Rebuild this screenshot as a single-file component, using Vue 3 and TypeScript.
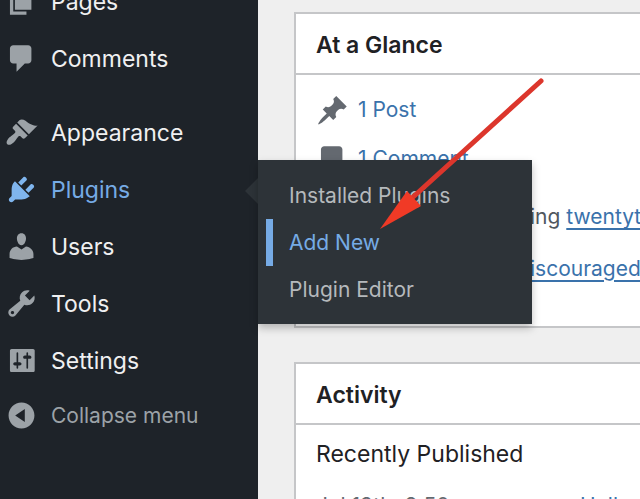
<script setup lang="ts">
import { ref } from 'vue'

interface MenuItem {
  id: string
  label: string
  path: string
  current?: boolean
  gap?: boolean
}

const commentPath =
  'M5 2h9c1.1 0 2 .9 2 2v7c0 1.1-.9 2-2 2h-2l-5 5v-5H5c-1.1 0-2-.9-2-2V4c0-1.1.9-2 2-2z'
const postPath =
  'M10.44 3.02l1.82-1.82 6.36 6.35-1.83 1.82c-1.05-.68-2.48-.57-3.41.36l-.75.75c-.92.93-1.04 2.35-.35 3.41l-1.83 1.82-2.41-2.41-2.8 2.79c-.42.42-3.38 2.71-3.8 2.29s1.86-3.39 2.28-3.81l2.79-2.79L4.1 9.36l1.83-1.82c1.05.69 2.48.57 3.4-.36l.75-.75c.93-.92 1.05-2.35.36-3.41z'
const collapsePath =
  'M10 2.16c4.33 0 7.84 3.51 7.84 7.84s-3.51 7.84-7.84 7.84S2.16 14.33 2.16 10 5.67 2.16 10 2.16zm2 11.72V6.12L6.18 9.97z'

const menu: MenuItem[] = [
  { id: 'pages', label: 'Pages', path: 'M6 15V2h10v13H6zm-1 1h8v2H3V5h2v11z' },
  { id: 'comments', label: 'Comments', path: commentPath },
  {
    id: 'appearance',
    label: 'Appearance',
    gap: true,
    path: 'M14.48 11.06L7.41 3.99l1.5-1.5c.5-.56 2.3-.47 3.51.32 1.21.8 1.43 1.28 2.91 2.1 1.18.64 2.45 1.26 4.45.85zm-.71.71L6.7 4.7 4.93 6.47c-.39.39-.39 1.02 0 1.41l1.06 1.06c.39.39.39 1.03 0 1.42-.6.6-1.43 1.11-2.21 1.69-.35.26-.7.53-1.01.84C1.43 14.23.4 16.08 1.4 17.07c.99 1 2.84-.03 4.18-1.36.31-.31.58-.66.85-1.02.57-.78 1.08-1.61 1.69-2.21.39-.39 1.02-.39 1.41 0l1.06 1.06c.39.39 1.02.39 1.41 0z',
  },
  {
    id: 'plugins',
    label: 'Plugins',
    current: true,
    path: 'M13.11 4.36L9.87 7.6 8 5.73l3.24-3.24c.35-.34 1.05-.2 1.56.32.52.51.66 1.21.31 1.55zm-8 1.77l.91-1.12 9.01 9.01-1.19.84c-.71.71-2.63 1.16-3.82 1.16H6.14L4.9 17.26c-.59.59-1.54.59-2.12 0-.59-.58-.59-1.53 0-2.12l1.24-1.24v-3.88c0-1.13.4-3.19 1.09-3.89zm7.26 3.97l3.24-3.24c.34-.35 1.04-.21 1.55.31.52.51.66 1.21.31 1.55l-3.24 3.25z',
  },
  {
    id: 'users',
    label: 'Users',
    path: 'M10 9.25c-2.27 0-2.73-3.44-2.73-3.44C7 4.02 7.82 2 9.97 2c2.16 0 2.98 2.02 2.71 3.81 0 0-.41 3.44-2.68 3.44zm0 2.57L12.72 10c2.39 0 4.52 2.33 4.52 4.53v2.49s-3.65 1.13-7.24 1.13c-3.65 0-7.24-1.13-7.24-1.13v-2.49c0-2.25 1.94-4.48 4.47-4.48z',
  },
  {
    id: 'tools',
    label: 'Tools',
    path: 'M16.68 9.77c-1.34 1.34-3.3 1.67-4.95.99l-5.41 6.52c-.99.99-2.59.99-3.58 0s-.99-2.59 0-3.57l6.52-5.42c-.68-1.65-.35-3.61.99-4.95 1.28-1.28 3.12-1.62 4.72-1.06l-2.89 2.89 2.82 2.82 2.86-2.87c.53 1.58.18 3.39-1.08 4.65zM3.81 16.21c.4.39 1.04.39 1.43 0 .4-.4.4-1.04 0-1.43-.39-.4-1.03-.4-1.43 0-.39.39-.39 1.03 0 1.43z',
  },
  {
    id: 'settings',
    label: 'Settings',
    path: 'M18 16V4c0-.55-.45-1-1-1H4c-.55 0-1 .45-1 1v12c0 .55.45 1 1 1h13c.55 0 1-.45 1-1zM8 11h1c.55 0 1 .45 1 1s-.45 1-1 1H8v1.5c0 .28-.22.5-.5.5s-.5-.22-.5-.5V13H6c-.55 0-1-.45-1-1s.45-1 1-1h1V5.5c0-.28.22-.5.5-.5s.5.22.5.5V11zm5-2h-1c-.55 0-1-.45-1-1s.45-1 1-1h1V5.5c0-.28.22-.5.5-.5s.5.22.5.5V7h1c.55 0 1 .45 1 1s-.45 1-1 1h-1v5.5c0 .28-.22.5-.5.5s-.5-.22-.5-.5V9z',
  },
]

const submenu: string[] = ['Installed Plugins', 'Add New', 'Plugin Editor']
const active = ref('Add New')
</script>

<template>
  <div class="admin">
    <nav class="sidebar">
      <ul class="menu">
        <li v-for="item in menu" :key="item.id" :class="{ gap: item.gap, current: item.current }">
          <a class="row" :href="'#' + item.id">
            <svg class="icon" viewBox="0 0 20 20" aria-hidden="true"><path :d="item.path" /></svg>
            <span>{{ item.label }}</span>
          </a>
          <ul v-if="item.current" class="flyout">
            <li v-for="name in submenu" :key="name">
              <a href="#plugins" :class="{ on: name === active }" @click.prevent="active = name">{{ name }}</a>
            </li>
          </ul>
        </li>
        <li>
          <button class="row collapse" type="button">
            <svg class="icon" viewBox="0 0 20 20" aria-hidden="true">
              <path fill-rule="evenodd" :d="collapsePath" />
            </svg>
            <span>Collapse menu</span>
          </button>
        </li>
      </ul>
    </nav>

    <main class="content">
      <section class="box">
        <h2>At a Glance</h2>
        <div class="glance">
          <ul class="counts">
            <li>
              <svg class="icon" viewBox="0 0 20 20" aria-hidden="true"><path :d="postPath" /></svg>
              <a href="#posts">1 Post</a>
            </li>
            <li>
              <svg class="icon" viewBox="0 0 20 20" aria-hidden="true"><path :d="commentPath" /></svg>
              <a href="#comments">1 Comment</a>
            </li>
          </ul>
          <p class="theme">ing <a href="#theme">twentyt</a></p>
          <p class="engines"><a href="#reading">iscouraged</a></p>
        </div>
      </section>

      <section class="box">
        <h2>Activity</h2>
        <div class="activity">
          <h3>Recently Published</h3>
          <p class="entry"><time>Jul 19th, 8:50 am</time><a href="#hello">Hello</a></p>
        </div>
      </section>
    </main>

    <svg class="arrow" viewBox="0 0 164 154" aria-hidden="true">
      <path class="shaft" d="M161 4L32 121" />
      <path class="head" d="M0 152L27 114L41 129Z" />
    </svg>
  </div>
</template>

<style>
body {
  margin: 0;
  background: #efefef;
}
</style>

<style scoped>
.admin {
  position: relative;
  display: flex;
  height: 100vh;
  overflow: hidden;
  background: #efefef;
  color: #1f2124;
  font-family: Inter, 'Liberation Sans', sans-serif;
  font-size: 23px;
  line-height: 32px;
}

ul,
p,
h2,
h3 {
  margin: 0;
  padding: 0;
  list-style: none;
}

a {
  color: #3a72ab;
}

.sidebar {
  flex: 0 0 258px;
  background: #1e2329;
}

.menu {
  margin-top: -27px;
}

.menu > li {
  position: relative;
}

.menu > .gap {
  margin-top: 17px;
}

.row {
  display: flex;
  align-items: center;
  gap: 13px;
  box-sizing: border-box;
  width: 100%;
  height: 57px;
  padding: 0 5px;
  color: #f0f0f1;
  text-decoration: none;
}

.icon {
  flex: none;
  width: 33px;
  height: 33px;
  fill: #9ca2a7;
}

.current > .row {
  color: #76abe5;
}

.current .icon {
  fill: #7fb5ee;
}

.current > .row::after {
  content: '';
  position: absolute;
  right: 0;
  top: 17px;
  border: 13px solid transparent;
  border-left-width: 0;
  border-right-color: #2d3338;
}

.collapse {
  height: 53px;
  border: 0;
  background: none;
  color: #9ca2a7;
  font: inherit;
  font-size: 21px;
  text-align: left;
}

.flyout {
  position: absolute;
  z-index: 2;
  left: 100%;
  top: -1px;
  box-sizing: border-box;
  width: 274px;
  padding: 12px 0 11px;
  background: #2d3338;
  box-shadow: 0 4px 8px rgba(0, 0, 0, 0.25);
}

.flyout a {
  display: block;
  margin-left: 8px;
  border-left: 7px solid transparent;
  padding-left: 16px;
  color: #b5b9bc;
  font-size: 21px;
  line-height: 47px;
  text-decoration: none;
}

.flyout a.on {
  border-left-color: #76abe5;
  color: #76abe5;
}

.content {
  flex: 1;
  display: flex;
  flex-direction: column;
  gap: 34px;
  min-width: 0;
  padding: 12px 0 0 36px;
}

.box {
  flex: none;
  border: 2px solid #c5c6c8;
  border-right: 0;
  background: #fff;
  white-space: nowrap;
}

h2 {
  padding: 15px 20px 12px;
  border-bottom: 2px solid #c5c6c8;
  font-size: 23px;
  font-weight: 600;
}

.glance {
  padding: 17px 20px 41px;
  font-size: 21px;
}

.counts li {
  display: flex;
  align-items: center;
  gap: 9px;
  height: 36px;
  margin-bottom: 13px;
}

.counts .icon {
  fill: #646970;
}

.counts a {
  text-decoration: none;
}

.theme {
  margin: 24px 0 20px 214px;
  color: #50575e;
}

.engines {
  margin-left: 214px;
}

.theme a,
.engines a {
  text-underline-offset: 4px;
}

.activity {
  padding: 13px 20px;
}

h3 {
  font-size: 23px;
  font-weight: 400;
}

.entry {
  display: flex;
  margin-top: 20px;
  font-size: 21px;
}

.entry time {
  min-width: 264px;
  color: #646970;
}

.entry a {
  text-decoration: none;
}

.arrow {
  position: absolute;
  z-index: 3;
  left: 380px;
  top: 77px;
  width: 164px;
  height: 154px;
  pointer-events: none;
}

.shaft {
  fill: none;
  stroke: #dc362c;
  stroke-width: 5;
  stroke-linecap: round;
}

.head {
  fill: #f03a26;
}
</style>
